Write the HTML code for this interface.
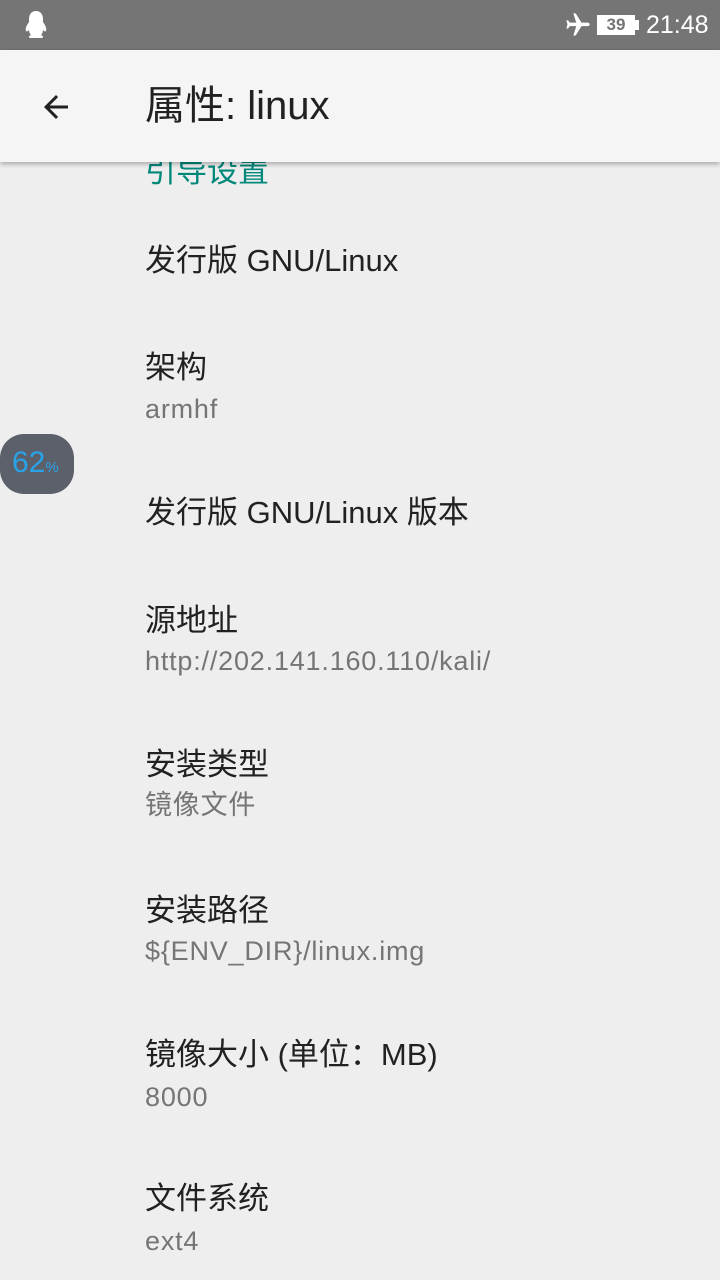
<!DOCTYPE html>
<html><head><meta charset="utf-8"><style>
body{margin:0;width:720px;height:1280px;background:#eeeeee;position:relative;overflow:hidden;font-family:"Liberation Sans","Noto Sans CJK SC",sans-serif}
.t{position:absolute;left:145px;font-size:31px;color:#212121;line-height:36px;white-space:nowrap}
.s{position:absolute;left:145px;font-size:27px;letter-spacing:0.8px;color:#757575;line-height:30px;white-space:nowrap}
</style></head><body>
<div class="t" style="top:154px;color:#00897b">引导设置</div>
<div style="position:absolute;left:0;top:0;width:720px;height:50px;background:#757575"></div>
<svg style="position:absolute;left:20px;top:9px" width="32" height="32" viewBox="0 0 32 32"><path d="M16 2c-5 0-7 4-7 8v3c-2 3-4 6-3 9 1 1 2 0 3-1 0 2 1 4 2 5-2 1-3 2-1 3h12c2-1 1-2-1-3 1-1 2-3 2-5 1 1 2 2 3 1 1-3-1-6-3-9v-3c0-4-2-8-7-8z" fill="#fff"/></svg>
<svg style="position:absolute;left:563px;top:11px" width="30" height="28" viewBox="0 0 24 24"><path d="M21 16v-2l-8-5V3.5C13 2.7 12.3 2 11.5 2S10 2.7 10 3.5V9l-8 5v2l8-2.5V19l-2 1.5V22l3.5-1 3.5 1v-1.5L13 19v-5.5z" fill="#fff" transform="rotate(90 12 12)"/></svg>
<div style="position:absolute;left:597px;top:15px;width:38px;height:20px;background:#fff;color:#757575;font-size:17px;font-weight:bold;text-align:center;line-height:20px">39</div>
<div style="position:absolute;left:635px;top:20px;width:4px;height:10px;background:#fff"></div>
<div style="position:absolute;left:646px;top:10px;font-size:25px;color:#fff;line-height:30px">21:48</div>
<div style="position:absolute;left:0;top:50px;width:720px;height:112px;background:#f5f5f5;box-shadow:0 2px 5px rgba(0,0,0,0.3)"></div>
<svg style="position:absolute;left:38px;top:89px" width="36" height="36" viewBox="0 0 24 24"><path d="M20 11H7.8l5.6-5.6L12 4l-8 8 8 8 1.4-1.4L7.8 13H20z" fill="#212121"/></svg>
<div style="position:absolute;left:145px;top:83px;font-size:40px;color:#212121;line-height:46px">属性: linux</div>
<div class="t" style="top:243px">发行版 GNU/Linux</div>
<div class="t" style="top:350px">架构</div>
<div class="s" style="top:394px">armhf</div>
<div class="t" style="top:495px">发行版 GNU/Linux 版本</div>
<div class="t" style="top:603px">源地址</div>
<div class="s" style="top:646px">http://202.141.160.110/kali/</div>
<div class="t" style="top:747px">安装类型</div>
<div class="s" style="top:790px">镜像文件</div>
<div class="t" style="top:893px">安装路径</div>
<div class="s" style="top:936px">${ENV_DIR}/linux.img</div>
<div class="t" style="top:1037px">镜像大小 (单位：MB)</div>
<div class="s" style="top:1082px">8000</div>
<div class="t" style="top:1181px">文件系统</div>
<div class="s" style="top:1226px">ext4</div>
<div style="position:absolute;left:0;top:434px;width:74px;height:60px;background:#5b606b;border-radius:24px"></div>
<div style="position:absolute;left:12px;top:445px;color:#29a3e8;font-size:30px;line-height:36px">62<span style="font-size:15px">%</span></div>
</body></html>
